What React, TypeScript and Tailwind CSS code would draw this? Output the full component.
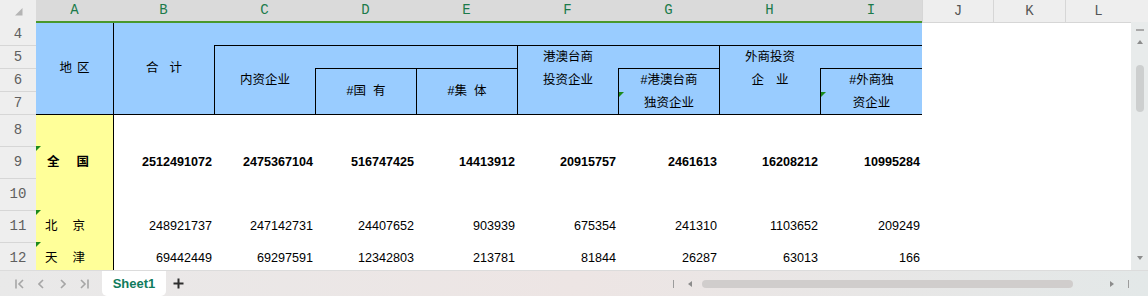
import React from 'react';

const COL = [
  'col-start-1', 'col-start-2', 'col-start-3', 'col-start-4', 'col-start-5', 'col-start-6', 'col-start-7',
  'col-start-8', 'col-start-9', 'col-start-10', 'col-start-11', 'col-start-12', 'col-start-13',
];
const ROW = [
  'row-start-1', 'row-start-2', 'row-start-3', 'row-start-4', 'row-start-5',
  'row-start-6', 'row-start-7', 'row-start-8', 'row-start-9', 'row-start-10',
];

const LETTERS = ['A', 'B', 'C', 'D', 'E', 'F', 'G', 'H', 'I'];
const EXTRA = ['J', 'K', 'L'];
const ROW_NUMS = [4, 5, 6, 7, 8, 9, 10, 11, 12];

type DataRow = { name?: [string, string]; bold?: boolean; values: string[] };

const DATA: DataRow[] = [
  { values: [] },
  {
    name: ['全', '国'],
    bold: true,
    values: ['2512491072', '2475367104', '516747425', '14413912', '20915757', '2461613', '16208212', '10995284'],
  },
  { values: [] },
  {
    name: ['北', '京'],
    values: ['248921737', '247142731', '24407652', '903939', '675354', '241310', '1103652', '209249'],
  },
  {
    name: ['天', '津'],
    values: ['69442449', '69297591', '12342803', '213781', '81844', '26287', '63013', '166'],
  },
];

const cjk = "font-['Liberation_Sans','Noto_Sans_CJK_SC',sans-serif] text-[12.5px] text-black";
const blue = 'bg-[#99ccff] border-black';

function Mark({ className = '' }: { className?: string }) {
  return (
    <span
      className={`absolute left-0 w-0 h-0 border-t-[5px] border-t-[#1c8a1c] border-r-[5px] border-r-transparent ${className}`}
    />
  );
}

function Nav({ dir, bar }: { dir: 'l' | 'r'; bar?: boolean }) {
  const w = bar ? 9 : 6;
  return (
    <svg width={w} height="10" viewBox={`0 0 ${w} 10`} fill="none" stroke="#a6a6a6" strokeWidth="1.6">
      {dir === 'l' ? (
        <>
          {bar && <path d="M1 0.5v9" />}
          <path d={bar ? 'M8 1L4 5l4 4' : 'M5 1L1 5l4 4'} />
        </>
      ) : (
        <>
          <path d="M1 1l4 4-4 4" />
          {bar && <path d="M8 0.5v9" />}
        </>
      )}
    </svg>
  );
}

function Sheet() {
  return (
    <div className="grid grid-cols-[36px_77px_101px_101px_101px_101px_101px_101px_101px_102px_71px_72px_66px] grid-rows-[23px_22px_23px_23px_23px_32px_32px_32px_32px_32px]">
      {/* corner */}
      <div className={`${COL[0]} ${ROW[0]} bg-[#eeeeee] relative`}>
        <svg className="absolute left-[15px] top-[8px]" width="8" height="8" viewBox="0 0 8 8">
          <polygon points="7.5,0 7.5,7.5 0,7.5" fill="#b4b4b4" />
        </svg>
      </div>

      {/* column headers */}
      {LETTERS.map((l, i) => (
        <div
          key={l}
          className={`${COL[i + 1]} ${ROW[0]} bg-[#dadada] border-b-2 border-[#4a982c] flex items-center justify-center font-['Liberation_Mono',monospace] text-[14px] text-[#1b7a4a]`}
        >
          {l}
        </div>
      ))}
      {EXTRA.map((l, i) => (
        <div
          key={l}
          className={`${COL[i + 10]} ${ROW[0]} h-[23px] bg-[#eeeeee] border-b border-l border-[#d6d6d6] flex items-center justify-center font-['Liberation_Mono',monospace] text-[14px] text-[#555555]`}
        >
          {l}
        </div>
      ))}

      {/* row headers */}
      {ROW_NUMS.map((n, i) => (
        <div
          key={n}
          className={`${COL[0]} ${ROW[i + 1]} bg-[#eeeeee] flex items-center justify-center font-['Liberation_Mono',monospace] text-[14px] text-[#5f5f5f] ${
            i > 0 ? 'border-t border-[#d6d6d6]' : ''
          }`}
        >
          {n}
        </div>
      ))}

      {/* header block */}
      <div className={`${COL[1]} row-start-2 row-span-4 ${blue} flex items-center justify-center gap-[5px] ${cjk}`}>
        <span>地</span>
        <span>区</span>
      </div>
      <div className={`${COL[2]} row-start-2 row-span-4 ${blue} border-l flex items-center justify-center gap-[11px] ${cjk}`}>
        <span>合</span>
        <span>计</span>
      </div>
      <div className={`${COL[3]} row-start-2 col-span-7 ${blue}`} />
      <div className={`${COL[3]} row-start-3 row-span-3 ${blue} border-l border-t flex items-center justify-center ${cjk}`}>
        内资企业
      </div>
      <div className={`${COL[4]} row-start-3 col-span-2 ${blue} border-t`} />
      <div className={`${COL[4]} row-start-4 row-span-2 ${blue} border-l border-t flex items-center justify-center gap-[7px] ${cjk}`}>
        <span>#国</span>
        <span>有</span>
      </div>
      <div className={`${COL[5]} row-start-4 row-span-2 ${blue} border-l border-t flex items-center justify-center gap-[7px] ${cjk}`}>
        <span>#集</span>
        <span>体</span>
      </div>
      <div className={`${COL[6]} row-start-3 row-span-3 ${blue} border-l border-t flex flex-col items-center leading-[23px] ${cjk}`}>
        <span>港澳台商</span>
        <span>投资企业</span>
      </div>
      <div className={`${COL[7]} row-start-3 ${blue} border-t`} />
      <div className={`${COL[7]} row-start-4 row-span-2 ${blue} border-l border-t relative flex flex-col items-center leading-[22.5px] ${cjk}`}>
        <span>#港澳台商</span>
        <span>独资企业</span>
        <Mark className="top-[23px]" />
      </div>
      <div className={`${COL[8]} row-start-3 row-span-3 ${blue} border-l border-t flex flex-col items-center leading-[23px] ${cjk}`}>
        <span>外商投资</span>
        <span className="flex gap-[12px]">
          <span>企</span>
          <span>业</span>
        </span>
      </div>
      <div className={`${COL[9]} row-start-3 ${blue} border-t`} />
      <div className={`${COL[9]} row-start-4 row-span-2 ${blue} border-l border-t relative flex flex-col items-center leading-[22.5px] ${cjk}`}>
        <span>#外商独</span>
        <span>资企业</span>
        <Mark className="top-[23px]" />
      </div>

      {/* data rows */}
      {DATA.map((row, r) => {
        const gr = r + 5;
        const top = r === 0 ? 'border-t border-black' : '';
        return (
          <React.Fragment key={r}>
            <div
              className={`${COL[1]} ${ROW[gr]} ${top} bg-[#ffff99] relative flex items-center text-black font-['Liberation_Sans','Noto_Sans_CJK_SC',sans-serif] text-[12.5px] ${
                row.bold ? 'pl-[11px] gap-[17px] font-bold' : 'pl-[9px] gap-[15px]'
              }`}
            >
              {row.name && (
                <>
                  <Mark className="top-0" />
                  <span>{row.name[0]}</span>
                  <span>{row.name[1]}</span>
                </>
              )}
            </div>
            {Array.from({ length: 8 }).map((_, c) => (
              <div
                key={c}
                className={`${COL[c + 2]} ${ROW[gr]} ${top} ${
                  c === 0 ? 'border-l border-black' : ''
                } flex items-center justify-end pr-[2px] font-['Liberation_Sans',Arial,sans-serif] text-[12.6px] text-black ${
                  row.bold ? 'font-bold' : ''
                }`}
              >
                {row.values[c] ?? ''}
              </div>
            ))}
          </React.Fragment>
        );
      })}
    </div>
  );
}

function VScroll() {
  return (
    <div className="w-[17px] flex flex-col shrink-0">
      <div className="h-[22px] bg-[#eeeeee] shrink-0" />
      <div className="flex-1 bg-[#e8ebeb] flex flex-col items-center">
        <div className="mt-[7px] w-[8px] h-[2px] bg-[#a9a9a9]" />
        <svg className="mt-[9px]" width="6" height="4" viewBox="0 0 6 4">
          <polygon points="3,0 6,4 0,4" fill="#8c8c8c" />
        </svg>
        <div className="mt-[21px] w-[8px] h-[47px] rounded-full bg-[#cdcfcf]" />
        <div className="flex-1" />
        <svg className="mb-[10px]" width="6" height="4" viewBox="0 0 6 4">
          <polygon points="0,0 6,0 3,4" fill="#8c8c8c" />
        </svg>
      </div>
    </div>
  );
}

function TabBar() {
  return (
    <div className="h-[26px] shrink-0 flex items-center bg-linear-to-r from-[#e9e9e9] via-[#ede5e4] to-[#e3e8e8] border-t border-[#dcdcdc]">
      <div className="flex items-center pl-[15px]">
        <Nav dir="l" bar />
        <span className="ml-[14px] flex">
          <Nav dir="l" />
        </span>
        <span className="ml-[16px] flex">
          <Nav dir="r" />
        </span>
        <span className="ml-[14px] flex">
          <Nav dir="r" bar />
        </span>
      </div>
      <div className="ml-[13px] w-[64px] h-[25px] self-start bg-white rounded-b-[5px] flex items-center justify-center font-['Liberation_Sans',sans-serif] font-bold text-[13px] text-[#0f7b5c]">
        Sheet1
      </div>
      <svg className="ml-[7px]" width="11" height="11" viewBox="0 0 11 11" stroke="#2e2e2e" strokeWidth="2">
        <path d="M5.5 0.5v10M0.5 5.5h10" />
      </svg>
      <div className="flex-1" />
      <div className="flex items-center pr-[19px]">
        <div className="w-px h-[8px] bg-[#9c9c9c]" />
        <svg className="ml-[14px]" width="4" height="6" viewBox="0 0 4 6">
          <polygon points="4,0 4,6 0,3" fill="#8c8c8c" />
        </svg>
        <div className="ml-[10px] w-[371px] h-[8px] rounded-full bg-[#d0cdcc]" />
        <svg className="ml-[37px]" width="4" height="6" viewBox="0 0 4 6">
          <polygon points="0,0 4,3 0,6" fill="#8c8c8c" />
        </svg>
        <div className="ml-[14px] w-px h-[8px] bg-[#9c9c9c]" />
      </div>
    </div>
  );
}

export default function App() {
  return (
    <div className="w-[1148px] h-[296px] overflow-hidden bg-white flex flex-col">
      <div className="h-[270px] flex overflow-hidden shrink-0">
        <div className="w-[1131px] h-[270px] overflow-hidden shrink-0">
          <Sheet />
        </div>
        <VScroll />
      </div>
      <TabBar />
    </div>
  );
}
